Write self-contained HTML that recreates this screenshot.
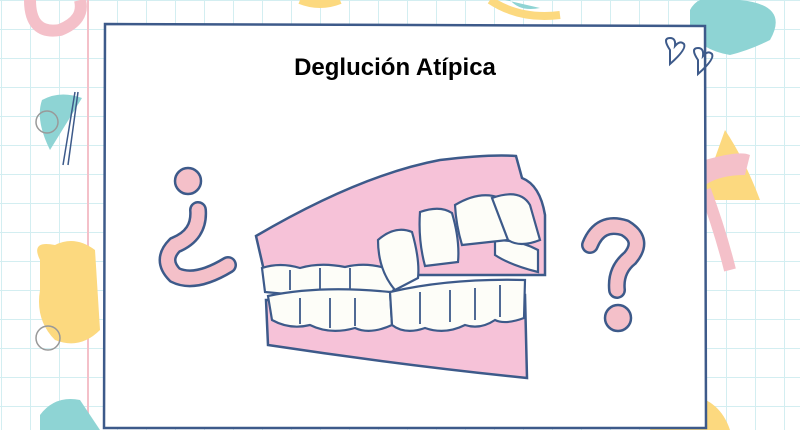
<!DOCTYPE html>
<html><head><meta charset="utf-8"><style>
html,body{margin:0;padding:0}
body{width:800px;height:430px;overflow:hidden;position:relative;background:#fff;
background-image:linear-gradient(#d3eef1 1px,transparent 1px),linear-gradient(90deg,#d3eef1 1px,transparent 1px);
background-size:29px 29px;background-position:0 0,1px 0;}
svg{position:absolute;left:0;top:0}
.t{position:absolute;left:0;width:790px;top:54px;text-align:center;font:bold 24px "Liberation Sans",sans-serif;color:#000}
</style></head><body>
<svg width="800" height="430" viewBox="0 0 800 430">
<line x1="88" y1="0" x2="88" y2="430" stroke="#f4c0c9" stroke-width="2"/>
<path d="M30 0 Q30 35 60 30 Q85 20 80 0" fill="none" stroke="#f4c0c9" stroke-width="12"/>
<path d="M42 100 Q60 90 82 98 L50 150 Q35 120 42 100Z" fill="#8ed4d4"/>
<circle cx="47" cy="122" r="11" fill="none" stroke="#999" stroke-width="1.5"/>
<path d="M75 92 L63 165 M78 92 L68 165" stroke="#3d5a8a" stroke-width="1.5"/>
<path d="M40 260 Q30 240 55 245 Q75 235 95 250 L100 330 Q80 350 55 340 Q35 320 40 290Z" fill="#fcd97f"/>
<circle cx="48" cy="338" r="12" fill="none" stroke="#999" stroke-width="1.5"/>
<path d="M40 415 Q55 395 80 400 L100 430 L40 430Z" fill="#8ed4d4"/>
<path d="M690 10 Q700 -10 740 0 Q790 5 770 40 Q750 50 730 55 Q700 50 690 30Z" fill="#8ed4d4"/>
<path d="M725 130 Q745 160 760 200 L700 200 Z" fill="#fcd97f"/>
<path d="M705 160 Q740 150 750 155 L745 175 Q720 175 705 185Z" fill="#f4c0c9"/>
<path d="M705 190 Q720 230 730 270" fill="none" stroke="#f4c0c9" stroke-width="12"/>
<path d="M650 430 Q660 400 690 395 Q720 400 730 430Z" fill="#fcd97f"/>
<path d="M300 0 Q320 8 340 0 M490 0 Q520 20 560 15" fill="none" stroke="#fcd97f" stroke-width="8"/>
<path d="M510 0 Q520 12 540 8 L505 0Z" fill="#8ed4d4"/>
<path d="M105 24 L705 26 L706 428 L104 428 Z" fill="#fff" stroke="#3d5a8a" stroke-width="2.5"/>
<path d="M670 50 q-8-12 0-12 q6 0 5 8 q5-6 9-2 q3 5-14 20z" fill="none" stroke="#3d5a8a" stroke-width="2"/>
<path d="M698 60 q-8-12 0-12 q6 0 5 8 q5-6 9-2 q3 5-14 20z" fill="none" stroke="#3d5a8a" stroke-width="2"/>
<circle cx="188" cy="181" r="13" fill="#f4c0c9" stroke="#3d5a8a" stroke-width="2.5"/>
<path d="M198 210 Q200 235 175 245 Q160 260 175 275 Q195 285 228 265" fill="none" stroke="#3d5a8a" stroke-width="18" stroke-linecap="round"/>
<path d="M198 210 Q200 235 175 245 Q160 260 175 275 Q195 285 228 265" fill="none" stroke="#f4c0c9" stroke-width="13" stroke-linecap="round"/>
<path d="M590 245 Q600 220 625 228 Q645 240 630 258 Q615 270 617 290" fill="none" stroke="#3d5a8a" stroke-width="18" stroke-linecap="round"/>
<path d="M590 245 Q600 220 625 228 Q645 240 630 258 Q615 270 617 290" fill="none" stroke="#f4c0c9" stroke-width="13" stroke-linecap="round"/>
<circle cx="618" cy="318" r="13" fill="#f4c0c9" stroke="#3d5a8a" stroke-width="2.5"/>
<!-- dentures -->
<path d="M256 236 Q360 175 440 160 Q490 154 516 156 L522 178 Q540 185 545 215 L545 275 L265 275 Z" fill="#f6c2d8" stroke="#3d5a8a" stroke-width="2.5"/>
<path d="M266 300 L525 295 L527 378 Q400 365 268 345 Z" fill="#f6c2d8" stroke="#3d5a8a" stroke-width="2.5"/>
<g fill="#fdfdf8" stroke="#3d5a8a" stroke-width="2.2">
<path d="M262 268 Q280 262 300 268 Q320 262 345 267 Q365 262 385 268 L395 288 L390 295 Q360 300 330 300 Q300 295 265 292 Z"/>
<path d="M495 240 Q520 240 538 250 L538 272 Q510 265 495 255 Z"/>
<path d="M268 296 Q320 285 390 292 L392 325 Q370 335 355 328 Q330 335 310 325 Q290 330 272 320 Z"/>
<path d="M390 292 Q450 278 525 280 L524 318 Q505 325 495 320 Q480 330 465 325 Q445 335 425 328 Q405 335 392 325 Z"/>
<path d="M378 240 Q395 225 412 232 Q420 260 418 278 L395 290 Q378 270 378 240Z"/>
<path d="M420 212 Q440 205 452 213 Q460 240 458 262 L425 266 Q418 240 420 212Z"/>
<path d="M455 205 Q480 190 500 198 Q510 225 508 240 L462 245 Q456 225 455 205Z"/>
<path d="M492 198 Q520 188 530 205 L540 240 Q520 248 508 240 Z"/>
</g>
<g stroke="#3d5a8a" stroke-width="1.8" fill="none">
<path d="M290 270 v20 M320 268 v22 M350 268 v22"/>
<path d="M300 298 v26 M330 298 v30 M355 298 v28 M420 292 v32 M450 290 v32 M475 288 v32 M500 285 v32"/>
</g>
</svg>
<div class="t">Deglución Atípica</div>
</body></html>
